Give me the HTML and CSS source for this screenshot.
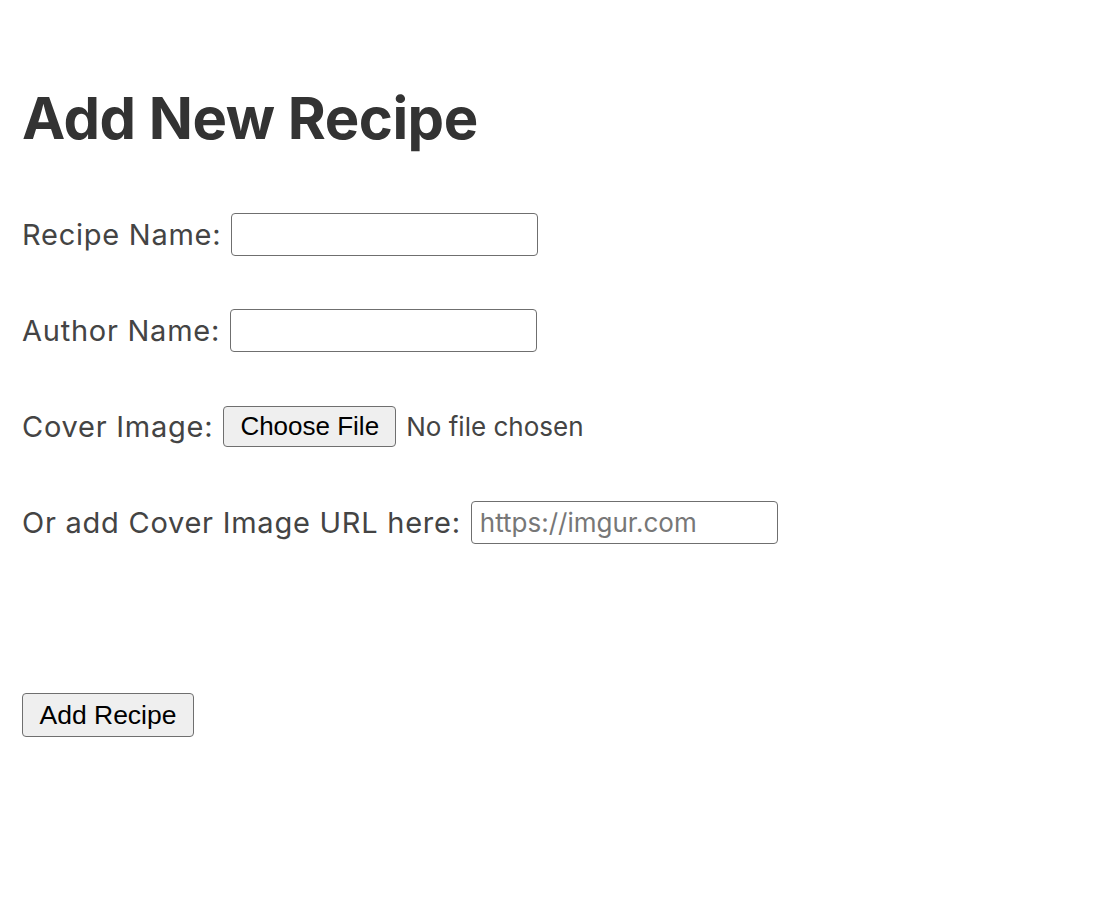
FILE: index.html
```html
<!DOCTYPE html>
<html>
<head>
<meta charset="utf-8">
<link rel="stylesheet" href="styles.css">
</head>
<body>
<main class="page">
  <h1 class="title">Add New Recipe</h1>
  <form class="form">
    <div class="row">
      <label class="label">Recipe Name:</label>
      <input class="text-input" type="text">
    </div>
    <div class="row">
      <label class="label">Author Name:</label>
      <input class="text-input" type="text">
    </div>
    <div class="row">
      <label class="label">Cover Image:</label>
      <span class="file">
        <button type="button" class="btn choose">Choose File</button>
        <span class="file-text">No file chosen</span>
      </span>
    </div>
    <div class="row">
      <label class="label">Or add Cover Image URL here:</label>
      <input class="text-input url" type="text" placeholder="https://imgur.com">
    </div>
    <div class="submit-row">
      <button type="button" class="btn submit">Add Recipe</button>
    </div>
  </form>
</main>
</body>
</html>
```

FILE: styles.css
```css
html, body {
  margin: 0;
  padding: 0;
  background: #fff;
}
.page {
  padding: 80px 22px 0 22px;
  font-family: Inter, "Noto Sans", sans-serif;
  color: #444;
}
.title {
  margin: 0;
  font-size: 58px;
  font-weight: 700;
  color: #333;
  line-height: 76px;
  letter-spacing: -0.5px;
}
.form {
  margin-top: 57px;
  display: flex;
  flex-direction: column;
  gap: 54px;
}
.row {
  display: flex;
  align-items: center;
  gap: 10px;
  height: 42px;
}
.label {
  font-size: 29px;
  letter-spacing: 0.75px;
  color: #444;
}
.text-input {
  box-sizing: border-box;
  width: 307px;
  height: 43px;
  border: 1.5px solid #6f6f6f;
  border-radius: 4px;
  padding: 0 8px;
  font-family: Inter, sans-serif;
  font-size: 26px;
  color: #333;
  background: #fff;
  outline: none;
}
.text-input::placeholder {
  color: #777;
}
.file {
  display: flex;
  align-items: center;
  gap: 10px;
}
.btn {
  box-sizing: border-box;
  border: 1.5px solid #6f6f6f;
  border-radius: 4px;
  background: #efefef;
  font-family: "Liberation Sans", Arial, sans-serif;
  color: #000;
  padding: 0;
}
.choose {
  width: 173px;
  height: 41px;
  font-size: 26px;
}
.file-text {
  font-size: 26px;
  color: #444;
}
.submit-row {
  margin-top: 96px;
}
.submit {
  height: 44px;
  width: 172px;
  font-size: 26.5px;
}
```
